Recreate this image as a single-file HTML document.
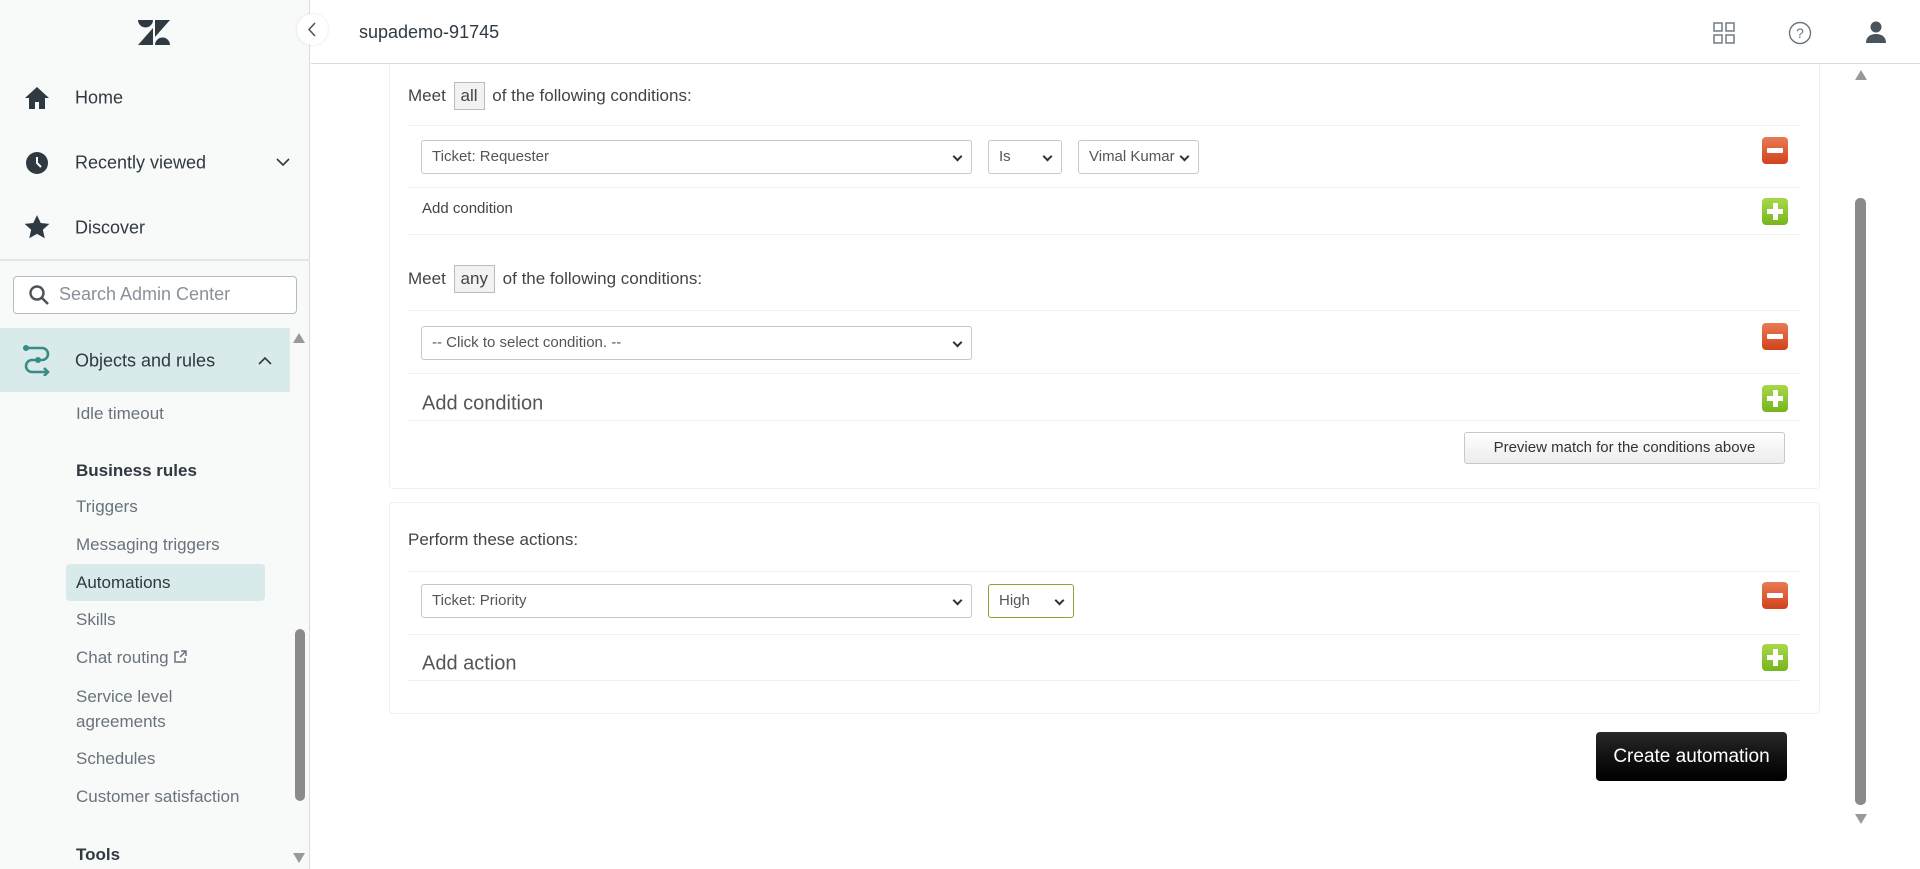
<!DOCTYPE html>
<html><head><meta charset="utf-8">
<style>
*{box-sizing:border-box;margin:0;padding:0}
body{width:1920px;height:869px;overflow:hidden;background:#fff;font-family:"Liberation Sans",sans-serif;position:relative;color:#2f3941}
.a{position:absolute}
#side{left:0;top:0;width:310px;height:869px;background:#f8f9f9;border-right:1px solid #d8dcde;z-index:3}
.nav{position:absolute;left:75px;font-size:18px;color:#2f3941;transform:translateY(-50%)}
.sub{position:absolute;left:76px;font-size:17px;color:#68737d;transform:translateY(-50%)}
.bold{color:#2f3941;font-weight:bold}
.hl{position:absolute;left:408px;right:121px;height:1px;background:#eef0f1}
.sel{position:absolute;height:34px;border:1px solid #c8c8c8;border-radius:3px;background:#fff;font-size:15px;color:#555;padding:0 10px;line-height:32px;font-family:"Liberation Sans Narrow","Liberation Sans",sans-serif}
.sel::after{content:"";position:absolute;right:10px;top:12px;width:5px;height:5px;border-right:2px solid #333;border-bottom:2px solid #333;transform:rotate(45deg)}
.minus,.plus{position:absolute;width:26px;height:27px;border-radius:4px;left:1762px}
.minus{background:linear-gradient(#e97a55,#d1431d)}
.minus::after{content:"";position:absolute;left:5px;right:5px;top:11px;height:5px;background:#fff;border-radius:1px}
.plus{background:linear-gradient(#a9d84a,#76b51d)}
.plus::before{content:"";position:absolute;left:5px;right:5px;top:11px;height:5px;background:#fff}
.plus::after{content:"";position:absolute;top:5px;bottom:5px;left:11px;width:5px;background:#fff}
.h{position:absolute;left:408px;font-size:17px;color:#444;transform:translateY(-50%);font-family:"Liberation Sans Narrow","Liberation Sans",sans-serif}
.box{display:inline-block;border:1px solid #bbb;background:#f2f2f2;padding:3px 6px;margin:0 3px}
.big{position:absolute;left:422px;font-size:20px;color:#555;transform:translateY(-50%);font-family:"Liberation Sans Narrow","Liberation Sans",sans-serif}
.panel{position:absolute;left:389px;width:1431px;border:1px solid #eef0f1;border-radius:4px}
#hdr{left:311px;top:0;width:1609px;height:64px;background:#fff;border-bottom:1px solid #d8dcde;z-index:2}
</style></head><body>
<div class="panel" style="top:40px;height:449px"></div>
<div class="panel" style="top:502px;height:212px"></div>
<div id="hdr" class="a"></div>
<div id="side" class="a">
 <svg class="a" style="left:138px;top:20px" width="32" height="25" viewBox="0 0 32 25"><g fill="#2f3941"><path d="M0 0h15A7.5 7.5 0 0 1 0 0z"/><path d="M17 0h15L17 17z"/><path d="M15 8v17H0z"/><path d="M17 25a7.5 7.5 0 0 1 15 0z"/></g></svg>
 <svg class="a" style="left:24px;top:86px" width="26" height="24" viewBox="0 0 26 24"><path d="M13 1 1 12h4v11h6v-7h4v7h6V12h4z" fill="#2f3941"/></svg>
 <div class="nav" style="top:98px">Home</div>
 <svg class="a" style="left:25px;top:151px" width="24" height="24" viewBox="0 0 24 24"><circle cx="12" cy="12" r="11" fill="#2f3941"/><path d="M12 6v6l4 4" stroke="#fff" stroke-width="2" fill="none"/></svg>
 <div class="nav" style="top:163px">Recently viewed</div>
 <svg class="a" style="left:276px;top:158px" width="14" height="9"><path d="M1 1l6 6 6-6" stroke="#2f3941" stroke-width="1.6" fill="none"/></svg>
 <svg class="a" style="left:23px;top:214px" width="28" height="27" viewBox="0 0 24 24"><path d="M12 1l3.3 7 7.7.8-5.8 5.2 1.7 7.6L12 17.7 5.1 21.6l1.7-7.6L1 8.8 8.7 8z" fill="#2f3941"/></svg>
 <div class="nav" style="top:228px">Discover</div>
 <div class="a" style="left:0;top:259px;width:310px;height:2px;background:#e4e7e9"></div>
 <div class="a" style="left:13px;top:276px;width:284px;height:38px;border:1px solid #b5bbbf;border-radius:4px;background:#fff"></div>
 <svg class="a" style="left:28px;top:284px" width="22" height="22" viewBox="0 0 22 22"><circle cx="9" cy="9" r="6.5" stroke="#49545c" stroke-width="2.4" fill="none"/><path d="M14 14l6 6" stroke="#49545c" stroke-width="2.6"/></svg>
 <div class="a" style="left:59px;top:284px;font-size:18px;color:#87929d">Search Admin Center</div>
 <div class="a" style="left:0;top:328px;width:290px;height:64px;background:#d8eaea"></div>
 <svg class="a" style="left:22px;top:344px" width="30" height="32" viewBox="0 0 30 32"><g stroke="#3a8a85" stroke-width="2.6" fill="none"><path d="M4 4h16a6 6 0 0 1 0 12H10a6 6 0 0 0 0 12h16"/><path d="M22 24l4 4-4 4"/></g><circle cx="4" cy="4" r="3" fill="#3a8a85"/><circle cx="16" cy="16" r="3" fill="#3a8a85"/></svg>
 <div class="nav" style="top:361px">Objects and rules</div>
 <svg class="a" style="left:258px;top:356px" width="14" height="9"><path d="M1 8l6-6 6 6" stroke="#2f3941" stroke-width="1.6" fill="none"/></svg>
 <svg class="a" style="left:293px;top:333px" width="12" height="10"><path d="M0 10L6 0l6 10z" fill="#999"/></svg>
 <div class="sub" style="top:414px">Idle timeout</div>
 <div class="sub bold" style="top:471px">Business rules</div>
 <div class="sub" style="top:507px">Triggers</div>
 <div class="sub" style="top:545px">Messaging triggers</div>
 <div class="a" style="left:66px;top:564px;width:199px;height:37px;background:#d8eaea;border-radius:4px"></div>
 <div class="sub" style="top:583px;color:#2f3941">Automations</div>
 <div class="sub" style="top:620px">Skills</div>
 <div class="sub" style="top:658px">Chat routing <svg width="14" height="14" viewBox="0 0 14 14" style="vertical-align:-1px"><path d="M6 2H2v10h10V8M8 1h5v5M13 1 7 7" stroke="#68737d" stroke-width="1.5" fill="none"/></svg></div>
 <div class="sub" style="top:709px;line-height:25px">Service level<br>agreements</div>
 <div class="sub" style="top:759px">Schedules</div>
 <div class="sub" style="top:797px">Customer satisfaction</div>
 <div class="sub bold" style="top:855px">Tools</div>
 <div class="a" style="left:295px;top:629px;width:10px;height:172px;background:#8a8a8a;border-radius:5px"></div>
 <svg class="a" style="left:293px;top:853px" width="12" height="10"><path d="M0 0h12L6 10z" fill="#999"/></svg>
</div>
<div class="a" style="left:297px;top:14px;width:31px;height:31px;border-radius:50%;background:#fff;box-shadow:0 0 3px rgba(0,0,0,.1);z-index:4"></div>
<svg class="a" style="left:307px;top:22px;z-index:5" width="10" height="15"><path d="M8 1 2 7.5 8 14" stroke="#49545c" stroke-width="1.5" fill="none"/></svg>
<div class="a" style="left:359px;top:22px;font-size:18px;color:#2f3941;z-index:4">supademo-91745</div>
<svg class="a" style="left:1713px;top:22px;z-index:4" width="22" height="22"><g fill="none" stroke="#68737d" stroke-width="1.4"><rect x="1" y="1" width="8" height="8"/><rect x="13" y="1" width="8" height="8"/><rect x="1" y="13" width="8" height="8"/><rect x="13" y="13" width="8" height="8"/></g></svg>
<svg class="a" style="left:1788px;top:21px;z-index:4" width="24" height="24"><circle cx="12" cy="12" r="10.5" stroke="#68737d" stroke-width="1.4" fill="none"/><text x="12" y="17" text-anchor="middle" font-size="14" fill="#68737d" font-family="Liberation Sans">?</text></svg>
<svg class="a" style="left:1865px;top:21px;z-index:4" width="22" height="22"><circle cx="11" cy="6" r="5.5" fill="#49545c"/><path d="M1 22c0-6 4-9 10-9s10 3 10 9z" fill="#49545c"/></svg>

<div class="h" style="top:96px">Meet <span class="box">all</span> of the following conditions:</div>
<div class="hl" style="top:125px"></div>
<div class="sel" style="left:421px;top:140px;width:551px">Ticket: Requester</div>
<div class="sel" style="left:988px;top:140px;width:74px">Is</div>
<div class="sel" style="left:1078px;top:140px;width:121px">Vimal Kumar</div>
<div class="minus" style="top:137px"></div>
<div class="hl" style="top:187px"></div>
<div class="a" style="left:422px;top:200px;font-size:15px;color:#444;font-family:'Liberation Sans Narrow','Liberation Sans',sans-serif">Add condition</div>
<div class="plus" style="top:198px"></div>
<div class="hl" style="top:234px"></div>

<div class="h" style="top:279px">Meet <span class="box">any</span> of the following conditions:</div>
<div class="hl" style="top:310px"></div>
<div class="sel" style="left:421px;top:326px;width:551px">-- Click to select condition. --</div>
<div class="minus" style="top:323px"></div>
<div class="hl" style="top:373px"></div>
<div class="big" style="top:404px">Add condition</div>
<div class="plus" style="top:385px"></div>
<div class="hl" style="top:420px"></div>
<div class="a" style="left:1464px;top:432px;width:321px;height:32px;border:1px solid #c8c8c8;border-radius:3px;background:linear-gradient(#fff,#ececec);font-size:15px;color:#333;text-align:center;line-height:30px">Preview match for the conditions above</div>

<div class="h" style="top:540px">Perform these actions:</div>
<div class="hl" style="top:571px"></div>
<div class="sel" style="left:421px;top:584px;width:551px">Ticket: Priority</div>
<div class="sel" style="left:988px;top:584px;width:86px;border:1.5px solid #8aa43a">High</div>
<div class="minus" style="top:582px"></div>
<div class="hl" style="top:634px"></div>
<div class="big" style="top:664px">Add action</div>
<div class="plus" style="top:644px"></div>
<div class="hl" style="top:680px"></div>

<div class="a" style="left:1596px;top:732px;width:191px;height:49px;border-radius:4px;background:linear-gradient(#2a2a2a,#111 50%,#000);color:#fff;font-size:19px;text-align:center;line-height:49px">Create automation</div>

<svg class="a" style="left:1855px;top:70px" width="12" height="10"><path d="M0 10L6 0l6 10z" fill="#999"/></svg>
<div class="a" style="left:1855px;top:198px;width:11px;height:607px;background:#8a8a8a;border-radius:5px"></div>
<svg class="a" style="left:1855px;top:814px" width="12" height="10"><path d="M0 0h12L6 10z" fill="#999"/></svg>
</body></html>
